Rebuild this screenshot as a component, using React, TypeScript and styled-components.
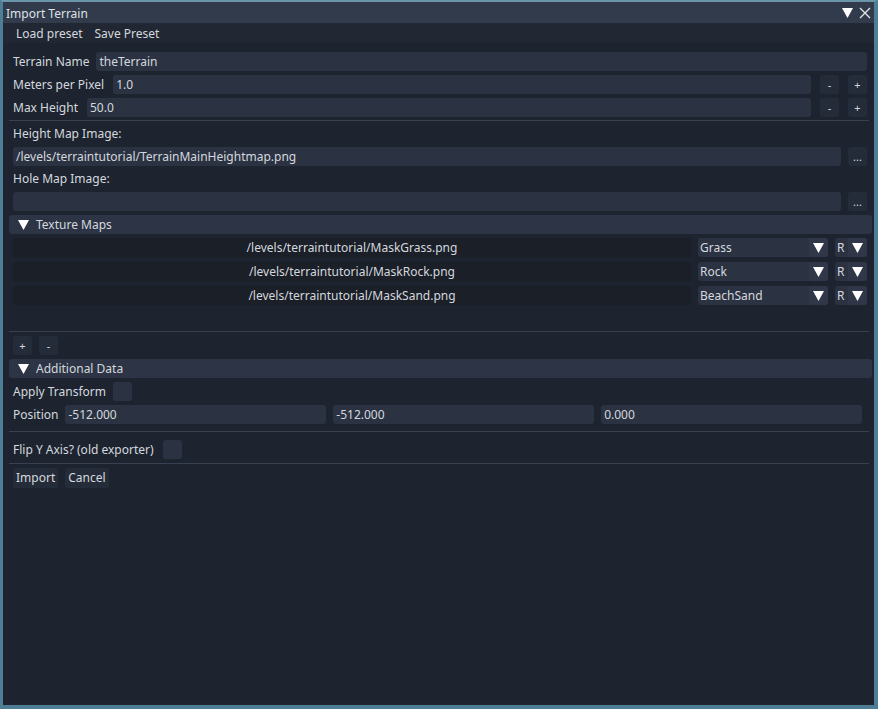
import React from 'react';
import styled, { createGlobalStyle } from 'styled-components';

const COLORS = {
    BORDER: '#4d7e95',
    BORDER_TOP: '#6b95aa',
    TITLE: '#323b4c',
    MENU: '#212833',
    BG: '#1d2430',
    CELL: '#1a1f28',
    FRAME: '#2b3242',
    FRAME_ARROW: '#2f3748',
    HEADER: '#2c3445',
    BUTTON: '#252c39',
    SEP: '#364152',
    TEXT: '#d4d8de'
};

const GlobalStyle = createGlobalStyle`
    html, body {
        margin: 0;
        padding: 0;
        background: ${COLORS.BG};
    }
    body {
        font-family: "Noto Sans", "Open Sans", sans-serif;
        font-size: 12px;
        color: ${COLORS.TEXT};
    }
`;

const Frame = styled.div`
    width: 878px;
    height: 709px;
    box-sizing: border-box;
    border-style: solid;
    border-color: ${COLORS.BORDER};
    border-width: 2px 4px 4px 3px;
    border-top-color: ${COLORS.BORDER_TOP};
    background: ${COLORS.BG};
    display: flex;
    flex-direction: column;
`;

const TitleBar = styled.div`
    height: 21px;
    background: ${COLORS.TITLE};
    display: flex;
    align-items: center;
    padding: 1px 3px 0 3px;
    box-sizing: border-box;
    color: #dde1e6;

    & .title {
        flex: 1;
    }

    & .icons {
        display: flex;
        align-items: center;
        gap: 6px;
    }
`;

const MenuBar = styled.div`
    height: 20px;
    background: ${COLORS.MENU};
    display: flex;
    align-items: center;
    gap: 12px;
    padding-left: 13px;
`;

const Body = styled.div`
    padding: 9px 7px 0 10px;
    display: flex;
    flex-direction: column;
    gap: 4px;
`;

const Row = styled.div<{ $gap?: number }>`
    display: flex;
    align-items: center;
    gap: ${(p) => p.$gap ?? 7}px;
    height: 19px;
`;

const Label = styled.div`
    white-space: nowrap;
    line-height: 18px;
`;

const Input = styled.div`
    flex: 1;
    height: 19px;
    background: ${COLORS.FRAME};
    border-radius: 3px;
    padding: 0 3px;
    display: flex;
    align-items: center;
    white-space: nowrap;
`;

const SmallButton = styled.div`
    width: 19px;
    height: 19px;
    background: ${COLORS.BUTTON};
    border-radius: 3px;
    display: flex;
    align-items: center;
    justify-content: center;
    font-size: 11px;
    flex-shrink: 0;
`;

const TextButton = styled.div`
    height: 20px;
    background: ${COLORS.BUTTON};
    border-radius: 3px;
    padding: 0 3px;
    display: flex;
    align-items: center;
`;

const Separator = styled.div<{ $mt?: number; $mb?: number }>`
    height: 1px;
    background: ${COLORS.SEP};
    margin: ${(p) => p.$mt ?? 0}px -2px ${(p) => p.$mb ?? 0}px -4px;
`;

const Header = styled.div`
    height: 19px;
    background: ${COLORS.HEADER};
    border-radius: 3px;
    margin: 0 -5px 0 -4px;
    display: flex;
    align-items: center;
    gap: 7px;
    padding-left: 9px;
`;

const TextureList = styled.div`
    height: 89px;
    display: flex;
    flex-direction: column;
    gap: 5px;
`;

const PathCell = styled.div`
    flex: 1;
    height: 19px;
    background: ${COLORS.CELL};
    border-radius: 3px;
    display: flex;
    align-items: center;
    justify-content: center;
    white-space: nowrap;
`;

const Combo = styled.div<{ $w: number }>`
    width: ${(p) => p.$w}px;
    height: 19px;
    background: ${COLORS.FRAME};
    border-radius: 3px;
    display: flex;
    align-items: center;
    flex-shrink: 0;
    overflow: hidden;

    & .value {
        flex: 1;
        padding-left: 2px;
    }

    & .arrow {
        width: 19px;
        height: 19px;
        background: ${COLORS.FRAME_ARROW};
        display: flex;
        align-items: center;
        justify-content: center;
    }
`;

const Checkbox = styled.div`
    width: 19px;
    height: 19px;
    background: ${COLORS.FRAME};
    border-radius: 3px;
`;

const Vec3 = styled.div`
    flex: 1;
    display: grid;
    grid-template-columns: 1fr 1fr 1fr;
    gap: 7px;
    margin-right: 5px;
`;

const Triangle = ({ size = 11 }: { size?: number }) => (
    <svg width={size} height={size - 1} viewBox="0 0 11 10">
        <polygon points="0,0 11,0 5.5,10" fill="#ffffff" />
    </svg>
);

const textures = [
    { path: '/levels/terraintutorial/MaskGrass.png', material: 'Grass' },
    { path: '/levels/terraintutorial/MaskRock.png', material: 'Rock' },
    { path: '/levels/terraintutorial/MaskSand.png', material: 'BeachSand' }
];

export default function App() {
    return (
        <>
            <GlobalStyle />
            <Frame>
                <TitleBar>
                    <span className="title">Import Terrain</span>
                    <div className="icons">
                        <Triangle size={11} />
                        <svg width="12" height="12" viewBox="0 0 12 12">
                            <path d="M1 1 L11 11 M11 1 L1 11" stroke="#e4e8ec" strokeWidth="1.3" />
                        </svg>
                    </div>
                </TitleBar>
                <MenuBar>
                    <span>Load preset</span>
                    <span>Save Preset</span>
                </MenuBar>
                <Body>
                    <Row>
                        <Label>Terrain Name</Label>
                        <Input>theTerrain</Input>
                    </Row>
                    <Row $gap={9}>
                        <Label>Meters per Pixel</Label>
                        <Input>1.0</Input>
                        <SmallButton>-</SmallButton>
                        <SmallButton>+</SmallButton>
                    </Row>
                    <Row $gap={9}>
                        <Label>Max Height</Label>
                        <Input>50.0</Input>
                        <SmallButton>-</SmallButton>
                        <SmallButton>+</SmallButton>
                    </Row>
                    <Separator $mt={-1} />
                    <Label>Height Map Image:</Label>
                    <Row>
                        <Input>/levels/terraintutorial/TerrainMainHeightmap.png</Input>
                        <SmallButton>...</SmallButton>
                    </Row>
                    <Label>Hole Map Image:</Label>
                    <Row>
                        <Input />
                        <SmallButton>...</SmallButton>
                    </Row>
                    <Header>
                        <Triangle />
                        <span>Texture Maps</span>
                    </Header>
                    <TextureList>
                        {textures.map((t) => (
                            <Row key={t.path}>
                                <PathCell>{t.path}</PathCell>
                                <Combo $w={130}>
                                    <span className="value">{t.material}</span>
                                    <span className="arrow">
                                        <Triangle />
                                    </span>
                                </Combo>
                                <Combo $w={32}>
                                    <span className="value">R</span>
                                    <span className="arrow">
                                        <Triangle />
                                    </span>
                                </Combo>
                            </Row>
                        ))}
                    </TextureList>
                    <Separator />
                    <Row>
                        <SmallButton>+</SmallButton>
                        <SmallButton>-</SmallButton>
                    </Row>
                    <Header>
                        <Triangle />
                        <span>Additional Data</span>
                    </Header>
                    <Row>
                        <Label>Apply Transform</Label>
                        <Checkbox />
                    </Row>
                    <Row>
                        <Label>Position</Label>
                        <Vec3>
                            <Input>-512.000</Input>
                            <Input>-512.000</Input>
                            <Input>0.000</Input>
                        </Vec3>
                    </Row>
                    <Separator $mt={3} $mb={4} />
                    <Row $gap={9}>
                        <Label>Flip Y Axis? (old exporter)</Label>
                        <Checkbox />
                    </Row>
                    <Separator />
                    <Row>
                        <TextButton>Import</TextButton>
                        <TextButton>Cancel</TextButton>
                    </Row>
                </Body>
            </Frame>
        </>
    );
}
